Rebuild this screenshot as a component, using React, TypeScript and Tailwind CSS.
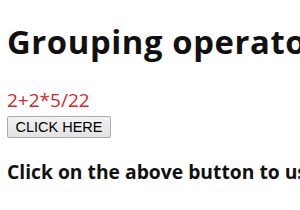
export default function App() {
  return (
    <div className="w-[300px] h-[210px] overflow-hidden bg-white pl-[7px] pt-[20px] font-['Open_Sans',sans-serif] text-[#111]">
      <h1 className="whitespace-nowrap text-[32.8px] font-bold leading-[44px] tracking-[0.6px]">Grouping operators</h1>
      <p className="mt-[23px] text-[19px] leading-[26px] text-[#d8252e]">2+2*5/22</p>
      <button className="mt-[3px] h-[22px] w-[104px] rounded-[2px] border border-[#acacac] bg-gradient-to-b from-[#f2f2f2] to-[#e2e2e2] font-['Liberation_Sans',sans-serif] text-[14.5px] leading-[20px] text-black">
        CLICK HERE
      </button>
      <p className="mt-[21px] whitespace-nowrap text-[19.3px] font-bold leading-[26px]">
        Click on the above button to use grouping operator
      </p>
    </div>
  );
}
